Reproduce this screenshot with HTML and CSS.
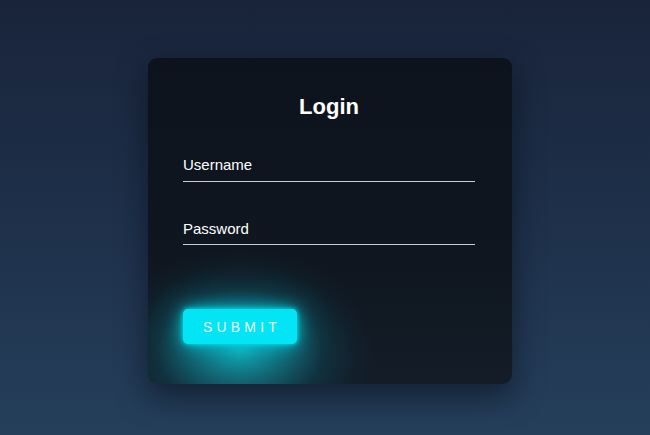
FILE: index.html
```html
<!DOCTYPE html>
<html>
<head>
<meta charset="utf-8">
<link rel="stylesheet" href="styles.css">
</head>
<body>
<div class="page">
  <form class="card">
    <h1 class="title">Login</h1>
    <div class="field field-user"><span class="label">Username</span></div>
    <div class="field field-pass"><span class="label">Password</span></div>
    <div class="actions"><button type="button" class="submit">SUBMIT</button></div>
  </form>
</div>
</body>
</html>
```
FILE: styles.css
```css
html, body {
  margin: 0;
  padding: 0;
  height: 100%;
}
body {
  background: linear-gradient(180deg, #19243a 0%, #1e304a 50%, #253f5b 100%);
  font-family: "Liberation Sans", Arial, sans-serif;
  overflow: hidden;
}
.page {
  display: flex;
  justify-content: center;
  padding-top: 58px;
}
.card {
  box-sizing: border-box;
  width: 364px;
  height: 326px;
  margin-left: 10px;
  padding: 36px 37px 40px 35px;
  background: linear-gradient(180deg, #0d131c 0%, #0f161f 60%, #131c27 100%);
  border-radius: 9px;
  box-shadow: 0 12px 30px rgba(5, 10, 20, 0.55);
  display: flex;
  flex-direction: column;
  overflow: hidden;
}
.title {
  margin: 0;
  text-align: center;
  font-size: 22px;
  line-height: 25px;
  font-weight: bold;
  color: #ffffff;
}
.field {
  border-bottom: 1.5px solid #c9ced6;
  color: #ffffff;
  font-size: 15px;
  line-height: 17px;
}
.field-user {
  margin-top: 37px;
  padding-bottom: 8px;
}
.field-pass {
  margin-top: 38px;
  padding-bottom: 7px;
}
.actions {
  margin-top: 64px;
  position: relative;
}
.actions::before {
  content: "";
  position: absolute;
  left: -80px;
  top: -65px;
  width: 274px;
  height: 205px;
  background: radial-gradient(ellipse 50% 50% at 50% 52%, rgba(20, 200, 215, 0.75) 0%, rgba(18, 170, 188, 0.5) 30%, rgba(14, 130, 150, 0.22) 60%, rgba(14, 100, 120, 0.06) 85%, rgba(14, 100, 120, 0) 100%);
  pointer-events: none;
}
.submit {
  position: relative;
  width: 114px;
  height: 35px;
  border: none;
  border-radius: 5px;
  background: #03e4f4;
  color: #e8fbff;
  font-family: "Liberation Sans", Arial, sans-serif;
  font-size: 14px;
  letter-spacing: 4.2px;
  padding: 0 0 0 4px;
  box-shadow: 0 0 5px #03e4f4, 0 0 16px rgba(3, 228, 244, 0.75), 0 4px 36px rgba(3, 228, 244, 0.45);
}
```
